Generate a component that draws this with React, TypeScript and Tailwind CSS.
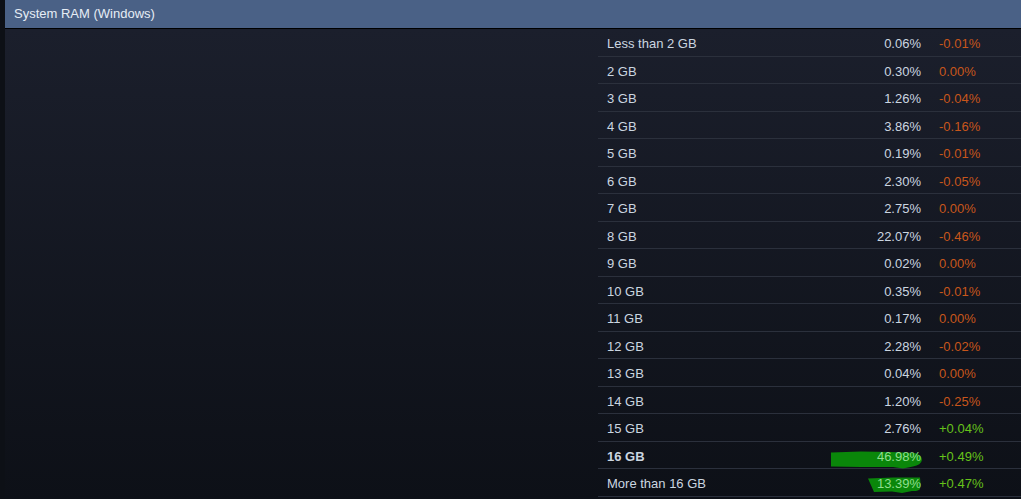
const rows: { label: string; pct: string; change: string; bold?: boolean }[] = [
  { label: "Less than 2 GB", pct: "0.06%", change: "-0.01%" },
  { label: "2 GB", pct: "0.30%", change: "0.00%" },
  { label: "3 GB", pct: "1.26%", change: "-0.04%" },
  { label: "4 GB", pct: "3.86%", change: "-0.16%" },
  { label: "5 GB", pct: "0.19%", change: "-0.01%" },
  { label: "6 GB", pct: "2.30%", change: "-0.05%" },
  { label: "7 GB", pct: "2.75%", change: "0.00%" },
  { label: "8 GB", pct: "22.07%", change: "-0.46%" },
  { label: "9 GB", pct: "0.02%", change: "0.00%" },
  { label: "10 GB", pct: "0.35%", change: "-0.01%" },
  { label: "11 GB", pct: "0.17%", change: "0.00%" },
  { label: "12 GB", pct: "2.28%", change: "-0.02%" },
  { label: "13 GB", pct: "0.04%", change: "0.00%" },
  { label: "14 GB", pct: "1.20%", change: "-0.25%" },
  { label: "15 GB", pct: "2.76%", change: "+0.04%" },
  { label: "16 GB", pct: "46.98%", change: "+0.49%", bold: true },
  { label: "More than 16 GB", pct: "13.39%", change: "+0.47%" },
];

function Scribble({ which }: { which: 0 | 1 }) {
  if (which === 0) {
    return (
      <svg
        className="absolute left-[233px] top-[9px]"
        width="94"
        height="20"
        viewBox="0 0 94 20"
      >
        <path
          d="M0,1.5 L30,0.5 L60,1 L84,2 Q91,4 91,9 Q90,14 82,15.5 L72,17.5 L62,16 L30,16 L0,15.5 Z"
          fill="#0a870a"
        />
      </svg>
    );
  }
  return (
    <svg
      className="absolute left-[270px] top-[8px]"
      width="56"
      height="19"
      viewBox="0 0 56 19"
    >
      <path
        d="M0,1.5 L25,0.5 L52,0.5 Q53,7 52,12 Q50,14.5 44,14 L34,16 L24,14.5 L6,15 Z"
        fill="#0a870a"
      />
    </svg>
  );
}

export default function App() {
  return (
    <div className="flex h-[499px] w-[1021px] overflow-hidden bg-[#0d1016] font-['Liberation_Sans',Arial,sans-serif] text-[13px]">
      <div className="w-[5px] shrink-0 bg-[#0d1016]" />
      <div className="flex flex-1 flex-col">
        <div className="flex h-[29px] shrink-0 items-center border-b border-black bg-[#4a6186] pl-[9px] text-[#e6edf5]">
          System RAM (Windows)
        </div>
        <div className="flex flex-1 bg-gradient-to-b from-[#1b1f2c] to-[#0d1017]">
          <div className="flex-1" />
          <div className="w-[423px] shrink-0">
            {rows.map((r, i) => {
              const up = r.change.startsWith("+");
              const marked = i >= 15;
              return (
                <div
                  key={r.label}
                  className="relative flex h-[27.5px] items-center border-b border-[#2b303c] pl-[9px] pt-[3px] text-[#cbd6e0]"
                >
                  {marked && <Scribble which={i === 15 ? 0 : 1} />}
                  <span className={r.bold ? "flex-1 font-bold" : "flex-1"}>{r.label}</span>
                  <span
                    className={
                      marked
                        ? "relative z-10 text-right text-[#8fde8f]"
                        : "relative z-10 text-right"
                    }
                  >
                    {r.pct}
                  </span>
                  <span
                    className={
                      up
                        ? "ml-[18px] w-[82px] text-[#66c21a]"
                        : "ml-[18px] w-[82px] text-[#c8561b]"
                    }
                  >
                    {r.change}
                  </span>
                </div>
              );
            })}
          </div>
        </div>
      </div>
    </div>
  );
}
